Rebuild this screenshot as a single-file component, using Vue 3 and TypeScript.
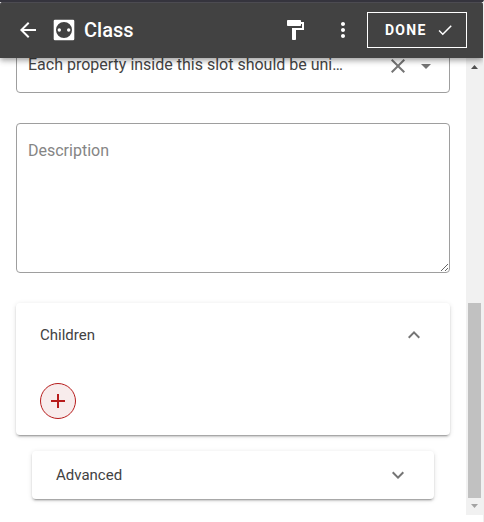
<script setup lang="ts">
import { ref } from 'vue'

const rule = ref('Each property inside this slot should be uni…')
const description = ref('')
const childrenOpen = ref(true)
const advancedOpen = ref(false)

const chevronUp = 'M7.41 15.41 12 10.83l4.59 4.58L18 14l-6-6-6 6z'
const chevronDown = 'M7.41 8.59 12 13.17l4.59-4.58L18 10l-6 6-6-6z'
</script>

<template>
  <div class="window">
    <header class="bar">
      <svg class="icon back" viewBox="0 0 24 24"><path d="M20 11H7.83l5.59-5.59L12 4l-8 8 8 8 1.41-1.41L7.83 13H20v-2z" /></svg>
      <svg class="icon type" viewBox="0 0 24 24">
        <path fill-rule="evenodd" d="M3 1.800h18A1.300 1.300 0 0 1 22.300 3.100v17.800a1.300 1.300 0 0 1-1.300 1.300H3A1.300 1.300 0 0 1 1.700 20.900V3.100A1.300 1.300 0 0 1 3 1.800ZM12 4a8 8 0 1 0 0 16 8 8 0 0 0 0-16Z" />
        <circle cx="7.300" cy="12" r="1.700" />
        <circle cx="16.700" cy="12" r="1.700" />
      </svg>
      <h1 class="title">Class</h1>
      <svg class="icon roller" viewBox="0 0 24 24"><path d="M18 4V3c0-.55-.45-1-1-1H5c-.55 0-1 .45-1 1v4c0 .55.45 1 1 1h12c.55 0 1-.45 1-1V6h1v4H9v11c0 .55.45 1 1 1h2c.55 0 1-.45 1-1v-9h8V4h-3z" /></svg>
      <svg class="icon more" viewBox="0 0 24 24"><path d="M12 8c1.1 0 2-.9 2-2s-.9-2-2-2-2 .9-2 2 .9 2 2 2zm0 2c-1.1 0-2 .9-2 2s.9 2 2 2 2-.9 2-2-.9-2-2-2zm0 6c-1.1 0-2 .9-2 2s.9 2 2 2 2-.9 2-2-.9-2-2-2z" /></svg>
      <button class="done">
        <span>DONE</span>
        <svg viewBox="0 0 24 24"><path d="M9 16.17 4.83 12l-1.42 1.41L9 19 21 7l-1.41-1.41z" /></svg>
      </button>
    </header>

    <div class="body">
      <main class="content">
        <div class="select">
          <span class="value">{{ rule }}</span>
          <svg class="icon clear" viewBox="0 0 24 24"><path d="M19 6.41 17.59 5 12 10.59 6.41 5 5 6.41 10.59 12 5 17.59 6.41 19 12 13.41 17.59 19 19 17.59 13.41 12z" /></svg>
          <svg class="icon caret" viewBox="0 0 24 24"><path d="M7 10l5 5 5-5z" /></svg>
        </div>

        <textarea v-model="description" class="description" placeholder="Description"></textarea>

        <section class="panel children">
          <div class="head" @click="childrenOpen = !childrenOpen">
            <span>Children</span>
            <svg class="icon" viewBox="0 0 24 24"><path :d="childrenOpen ? chevronUp : chevronDown" /></svg>
          </div>
          <div v-if="childrenOpen" class="inner">
            <button class="add" aria-label="Add">
              <svg viewBox="0 0 24 24"><path d="M19 13h-6v6h-2v-6H5v-2h6V5h2v6h6v2z" /></svg>
            </button>
          </div>
        </section>

        <section class="panel advanced">
          <div class="head" @click="advancedOpen = !advancedOpen">
            <span>Advanced</span>
            <svg class="icon" viewBox="0 0 24 24"><path :d="advancedOpen ? chevronUp : chevronDown" /></svg>
          </div>
        </section>
      </main>

      <div class="scrollbar">
        <svg class="arrow" viewBox="0 0 17 17"><path fill="#505050" d="M5 11h7L8.500 7z" /></svg>
        <div class="track"><div class="thumb"></div></div>
        <svg class="arrow" viewBox="0 0 17 17"><path fill="#a3a3a3" d="M5 6h7L8.500 10z" /></svg>
      </div>
    </div>
  </div>
</template>

<style>
body {
  background: #fff;
  overflow: hidden;
}
</style>

<style scoped>
.window {
  box-sizing: border-box;
  width: 484px;
  height: 522px;
  display: flex;
  flex-direction: column;
  border-top: 2px solid #35343d;
  border-right: 1px solid #f0f0f0;
  font-family: Roboto, "Liberation Sans", sans-serif;
  overflow: hidden;
}
svg {
  display: block;
  flex: none;
  fill: currentColor;
}
.icon {
  width: 24px;
  height: 24px;
}
.bar {
  position: relative;
  z-index: 1;
  box-sizing: border-box;
  flex: none;
  height: 56px;
  padding: 0 16px;
  display: flex;
  align-items: center;
  color: #fff;
  background: #424242;
  border-radius: 3px 3px 0 0;
  box-shadow: inset 0 1px #4c4b51, 0 2px 4px -1px rgba(0, 0, 0, 0.2), 0 4px 5px rgba(0, 0, 0, 0.14), 0 1px 10px rgba(0, 0, 0, 0.12);
}
.type {
  margin-left: 12px;
}
.title {
  flex: 1;
  margin: 0 0 0 8px;
  font-size: 20px;
  font-weight: 500;
  line-height: 24px;
}
.more {
  margin-left: 24px;
}
.done {
  box-sizing: border-box;
  width: 100px;
  height: 36px;
  margin-left: 12px;
  padding: 0 12px 0 17px;
  display: flex;
  align-items: center;
  justify-content: space-between;
  color: #fff;
  background: none;
  border: 1px solid #fff;
  font: 700 14px Roboto, sans-serif;
  letter-spacing: 1.25px;
}
.done svg {
  width: 18px;
  height: 18px;
}
.body {
  flex: none;
  height: 457px;
  display: flex;
  overflow: hidden;
}
.content {
  flex: 1;
  padding: 0 16px;
}
.select {
  box-sizing: border-box;
  height: 56px;
  margin-top: -21px;
  padding: 0 11px;
  display: flex;
  align-items: center;
  border: 1px solid #9e9e9e;
  border-radius: 4px;
  color: #757575;
}
.value {
  flex: 1;
  white-space: nowrap;
  font-size: 16px;
  line-height: 24px;
  color: #444;
}
.clear,
.caret {
  margin-top: 2px;
}
.caret {
  margin-left: 4px;
}
.description {
  box-sizing: border-box;
  display: block;
  width: 434px;
  height: 150px;
  margin: 30px 0;
  padding: 17px 11px;
  border: 1px solid #9e9e9e;
  border-radius: 4px;
  outline: none;
  font: 16px/20px Roboto, sans-serif;
  color: #333;
}
.description::placeholder {
  color: #858585;
}
.panel {
  border-radius: 4px;
  background: #fff;
  box-shadow: 0 3px 1px -2px rgba(0, 0, 0, 0.2), 0 2px 2px rgba(0, 0, 0, 0.14), 0 1px 5px rgba(0, 0, 0, 0.12);
}
.head {
  display: flex;
  align-items: center;
  justify-content: space-between;
  height: 64px;
  padding: 0 24px;
  font-size: 15px;
  color: #424242;
}
.head .icon {
  color: #757575;
}
.inner {
  padding: 16px 24px;
}
.advanced {
  margin: 16px 16px 0;
}
.advanced .head {
  height: 48px;
}
.add {
  box-sizing: border-box;
  width: 36px;
  height: 36px;
  padding: 0;
  display: flex;
  align-items: center;
  justify-content: center;
  color: #b71c1c;
  background: #f8ecec;
  border: 1px solid #b71c1c;
  border-radius: 50%;
}
.add svg {
  width: 24px;
  height: 24px;
}
.scrollbar {
  flex: none;
  width: 17px;
  display: flex;
  flex-direction: column;
  background: #f1f1f1;
}
.arrow {
  width: 17px;
  height: 17px;
}
.track {
  flex: 1;
  padding: 228px 2px 0;
}
.thumb {
  height: 195px;
  background: #c1c1c1;
}
</style>
